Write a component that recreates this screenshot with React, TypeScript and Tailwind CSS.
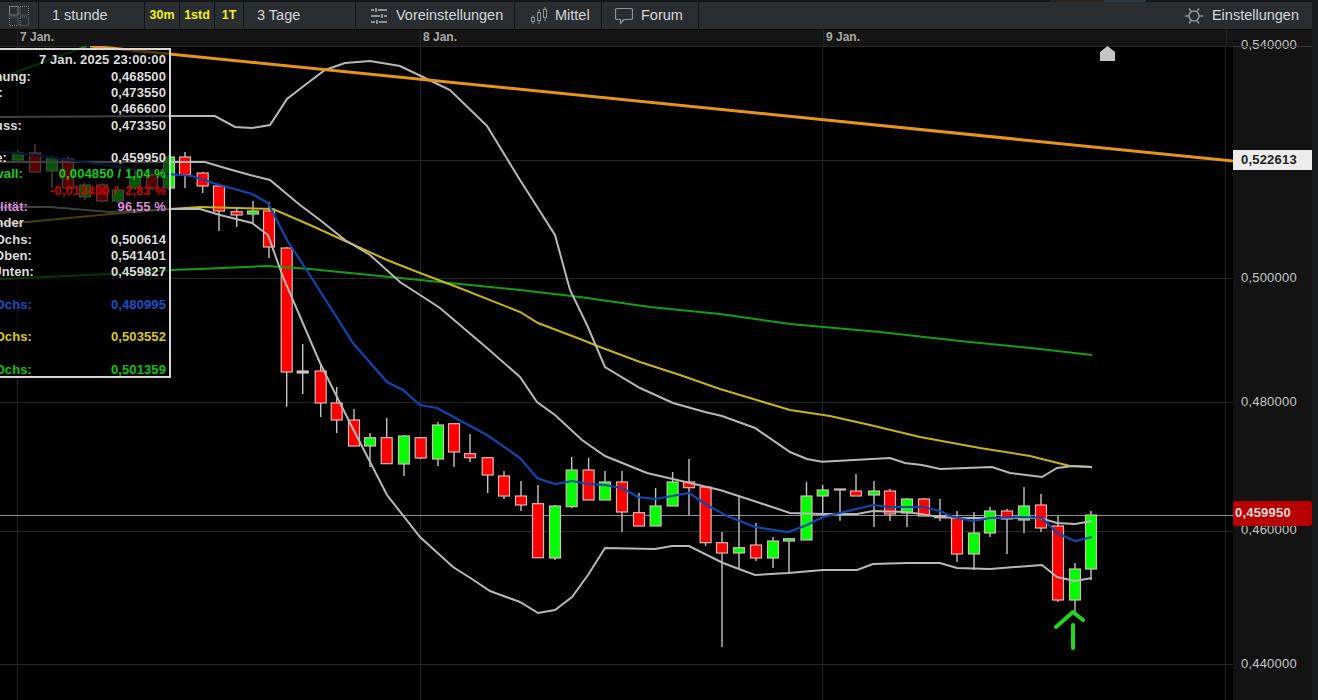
import React from 'react';

type Candle = [x: number, top: number, bottom: number, high: number, low: number, color: 'r' | 'g' | 'w'];

// body top/bottom and wick top/bottom in page pixels, the chart svg uses the same coordinates
const candles: Candle[] = [
  [18, 153, 160, 150, 162, 'g'], [35, 153, 172, 144, 172, 'r'], [52, 158, 171, 156, 188, 'g'], [68, 159, 188, 157, 190, 'r'],
  [85, 185, 197, 183, 200, 'g'], [102, 185, 201, 183, 202, 'r'], [118, 190, 201, 186, 203, 'g'], [135, 177, 188, 170, 190, 'g'],
  [152, 175, 188, 172, 190, 'r'], [169, 157, 188, 155, 190, 'g'],
  [185, 157, 175, 152, 188, 'r'], [202.7, 173, 186, 172, 193, 'r'], [219, 186, 211, 184, 231, 'r'], [236.7, 211.7, 215, 208, 227, 'r'],
  [253, 211, 214, 201, 224, 'g'], [269, 211, 247, 202, 258, 'r'], [286.7, 248, 372, 247, 406.7, 'r'], [302.7, 371, 373, 344, 394, 'w'],
  [320.7, 371, 403, 365, 417, 'r'], [336.7, 403, 420, 387, 433, 'r'], [354, 420, 446, 409, 446, 'r'], [370, 437.7, 446, 433, 467, 'g'],
  [386.7, 437.7, 463.7, 418, 464, 'r'], [404, 436, 464, 435, 476, 'g'], [420.7, 437.7, 458, 437, 459, 'r'], [438, 425, 459, 422, 466, 'g'],
  [454, 423.7, 452, 423, 467, 'r'], [470, 453.7, 457.7, 434, 462, 'r'], [487.7, 457.7, 475, 457, 493, 'r'], [504, 476, 496, 471, 499, 'r'],
  [521, 496, 505, 481, 511, 'r'], [538, 503.7, 557.7, 485, 558, 'r'], [555, 506, 558, 505, 560, 'g'], [571.7, 470, 506.7, 457, 508, 'g'],
  [588.6, 470, 500, 458, 500, 'r'], [605, 482, 500, 471, 500, 'g'], [622, 482, 512, 471, 532, 'r'], [639, 512.7, 526, 493, 526, 'r'],
  [655.6, 506, 526, 488, 526, 'g'], [672.6, 482, 506, 472, 506, 'g'], [689, 482, 487.7, 459, 515, 'r'], [705.6, 487, 542.7, 487, 546, 'r'],
  [722, 542.7, 553, 532, 647, 'r'], [739, 547.7, 553, 495, 568, 'g'], [756, 545, 558, 523, 561, 'r'], [773, 541, 558, 537, 568, 'g'],
  [789, 538.7, 541, 538, 573, 'g'], [806.5, 496, 540, 482, 540, 'g'], [822.7, 490, 496, 485, 515, 'g'], [840, 489, 490, 489, 520.7, 'w'],
  [856, 491, 496, 474, 496, 'r'], [874, 491, 495, 481, 527, 'g'], [890, 491, 514, 489, 521, 'r'], [907, 499, 513, 498, 527, 'g'],
  [924, 499, 516, 498, 516, 'r'], [940, 515.7, 517.7, 499, 521, 'w'], [957, 518, 554, 511, 562, 'r'], [974, 533, 554, 512, 570, 'g'],
  [990, 511, 533, 507, 537, 'g'], [1007, 511, 519, 509, 554, 'r'], [1024, 506, 520, 487, 533, 'g'], [1041, 505, 528, 494, 532, 'r'],
  [1058, 526, 600, 516, 602, 'r'], [1075, 569, 600, 563, 613, 'g'], [1091, 515, 569, 511, 580, 'g'],
];

const candleFill = { r: '#ff0000', g: '#00ff00', w: '#d8d8d8' };

const upperBand = '0,117 171,116 215,116 235,127 252,128 270,125 287,99 305,85 325,70 345,63 370,61 400,66 425,78 450,90 487,126 520,180 555,235 570,290 587,325 605,367 640,388 673,403 705,412 722,416 755,428 790,452 807,459 822,461.7 890,458 905,463 922,465 940,469 992,467 1010,473 1042,477 1057,468 1073,466 1092,467';
const midBand = '0,162 205,162 225,168 250,175 270,180 300,205 320,220 345,240 370,255 400,282 420,295 440,308 487,348 520,377 537,402 555,415 582,440 605,456 647,473 690,483 720,490 757,502 790,513 823,514 857,514 873,511 907,512 940,517 957,518 990,518 1040,518 1057,523 1075,524 1092,521';
const lowerBand = '0,207 50,207 110,212 170,209 200,209 220,215 252,223 268,235 283,277 320,363 350,423 387,495 420,537 453,567 472,579 490,591 520,602 538,613 555,610 572,597 588,575 605,548 655,549 672,546 689,546 723,563 755,575 788,573 823,570 857,570 873,564 907,563 940,563 957,568 990,569 1042,565 1057,577 1075,581 1092,578';
const blueLine = '0,152 17,153 83,162 167,174 192,176 213,183 252,194 268,203 287,240 313,280 353,343 387,382 403,390 420,405 437,408 487,435 520,458 537,478 555,484 572,481 588,484 605,485 622,488 638,497 655,499 672,496 689,493 707,505 727,516 755,527 788,532 807,525 823,517 873,505 890,507 923,507 940,511 953,517 973,521 990,518 1023,517 1042,518 1057,533 1075,541 1092,537';
const yellowLine = '0,224 27,222 100,215 170,209 200,207 273,209 310,225 343,240 387,260 420,273 457,287 520,312 538,323 580,339 600,347 640,362 680,375 720,389 760,401 790,410 830,416 870,425 920,437 980,448 1030,456 1070,466 1092,467';
const greenLine = '0,279 110,274 170,270 200,269 267,266 310,269 340,272 420,280 470,285 520,290 580,297 650,307 720,314 790,324 880,332 960,341 1040,349 1092,355';

const infoRows = [
  { label: 'Eröffnung:', value: '0,468500', w: 'w-[31px]', color: 'text-[#dcdcdc]' },
  { label: 'Hoch:', value: '0,473550', w: 'w-[3px]', color: 'text-[#dcdcdc]' },
  { label: 'Tief:', value: '0,466600', w: 'w-0', color: 'text-[#dcdcdc]' },
  { label: 'Schluss:', value: '0,473350', w: 'w-[22px]', color: 'text-[#dcdcdc]' },
  { label: '', value: '', w: 'w-0', color: '' },
  { label: 'Aktuelle:', value: '0,459950', w: 'w-[7px]', color: 'text-[#dcdcdc]' },
  { label: 'Intervall:', value: '0,004850 / 1,04 %', w: 'w-[23px]', color: 'text-[#14d014]', labelColor: 'text-[#14d014]' },
  { label: '', value: '-0,013400 / -2,83 %', w: 'w-0', color: 'text-[#d00000]' },
  { label: 'Volatilität:', value: '96,55 %', w: 'w-[28px]', color: 'text-[#dc8adc]', labelColor: 'text-[#dc8adc]' },
  { label: 'Bänder', value: '', w: 'w-[24px]', color: '' },
  { label: 'SMA Ochs:', value: '0,500614', w: 'w-[32px]', color: 'text-[#dcdcdc]' },
  { label: 'BB Oben:', value: '0,541401', w: 'w-[32px]', color: 'text-[#dcdcdc]' },
  { label: 'BB Unten:', value: '0,459827', w: 'w-[34px]', color: 'text-[#dcdcdc]' },
  { label: '', value: '', w: 'w-0', color: '' },
  { label: 'SMA Ochs:', value: '0,480995', w: 'w-[32px]', color: 'text-[#1a50c8]', labelColor: 'text-[#1a50c8]' },
  { label: '', value: '', w: 'w-0', color: '' },
  { label: 'SMA Ochs:', value: '0,503552', w: 'w-[32px]', color: 'text-[#d8cc14]', labelColor: 'text-[#d8cc14]' },
  { label: '', value: '', w: 'w-0', color: '' },
  { label: 'SMA Ochs:', value: '0,501359', w: 'w-[32px]', color: 'text-[#12c012]', labelColor: 'text-[#12c012]' },
];

const ToolItem: React.FC<{ className: string; children: React.ReactNode }> = ({ className, children }) => (
  <div className={`flex h-full shrink-0 items-center border-r border-[#101214] ${className}`}>{children}</div>
);

const LayoutIcon = () => (
  <svg width="20" height="20" viewBox="0 0 20 20" fill="none" stroke="#777b7f" strokeWidth="1">
    <rect x="0.5" y="0.5" width="8.5" height="8.5" />
    <rect x="11" y="0.5" width="8.5" height="8.5" strokeDasharray="1 1" />
    <rect x="0.5" y="11" width="8.5" height="8.5" strokeDasharray="1 1" />
    <rect x="11" y="11" width="8.5" height="8.5" strokeDasharray="1 1" />
  </svg>
);

const SlidersIcon = () => (
  <svg width="18" height="18" viewBox="0 0 18 18" fill="none" stroke="#8f9397" strokeWidth="2">
    <path d="M1 3h3M8 3h9M6 1v4M1 9h9M14 9h3M12 7v4M1 15h4M9 15h8M7 13v4" />
  </svg>
);

const CandleIcon = () => (
  <svg width="18" height="18" viewBox="0 0 18 18" fill="none" stroke="#8f9397" strokeWidth="1">
    <rect x="1.5" y="10.5" width="3" height="4" />
    <path d="M3 8v2.5M3 14.5V17" />
    <rect x="7.5" y="5.5" width="3" height="8" />
    <path d="M9 2v3.5M9 13.500V17" />
    <rect x="13.5" y="2.500" width="3" height="8" />
    <path d="M15 0v2.5M15 10.5V14" />
  </svg>
);

const BubbleIcon = () => (
  <svg width="18" height="18" viewBox="0 0 18 18" fill="none" stroke="#8f9397" strokeWidth="1.2" strokeLinejoin="round">
    <path d="M2 1.500h14a1.500 1.500 0 0 1 1.500 1.500v8a1.500 1.500 0 0 1-1.500 1.500H9L5.500 16.500v-4H2A1.500 1.500 0 0 1 .5 11V3A1.500 1.500 0 0 1 2 1.500z" />
  </svg>
);

const GearIcon = () => (
  <svg width="18" height="18" viewBox="0 0 18 18" fill="none" stroke="#8f9397" strokeWidth="1.6">
    <circle cx="9" cy="9" r="5" />
    <path d="M0 9h4M14 9h4M4 1.500l2.500 3.500M14 1.500L11.500 5M4 16.500L6.500 13M14 16.500L11.500 13" />
  </svg>
);

const axisLabels = [
  { text: '0,500000', pos: 'top-[223px]' },
  { text: '0,480000', pos: 'top-[347px]' },
  { text: '0,460000', pos: 'top-[475px]' },
  { text: '0,440000', pos: 'top-[609px]' },
];

const App: React.FC = () => {
  return (
    <div className="flex h-[700px] w-[1318px] overflow-hidden bg-black font-['Liberation_Sans',Arial,sans-serif]">
      <div className="flex w-[1312px] shrink-0 flex-col">
        <div className="flex h-[2px] shrink-0 bg-[#15181a]">
          <div className="ml-[1050px] w-[54px] bg-[#2a2420]" />
          <div className="w-[42px] bg-[#2b3a45]" />
        </div>

        {/* toolbar */}
        <div className="flex h-[27px] shrink-0 items-center bg-[#2b2e31] text-[14.500px] text-[#d4d7da]">
          <ToolItem className="w-[39px] pl-[9px]"><LayoutIcon /></ToolItem>
          <ToolItem className="w-[106px] pl-[13px]">1 stunde</ToolItem>
          <ToolItem className="w-[35px] justify-center text-[12.500px] font-bold text-[#f4f021]">30m</ToolItem>
          <ToolItem className="w-[35px] justify-center text-[12.500px] font-bold text-[#f4f021]">1std</ToolItem>
          <ToolItem className="w-[29px] justify-center text-[12.500px] font-bold text-[#f4f021]">1T</ToolItem>
          <ToolItem className="w-[112px] pl-[13px]">3 Tage</ToolItem>
          <ToolItem className="w-[159px] gap-[8px] pl-[14px]"><SlidersIcon />Voreinstellungen</ToolItem>
          <ToolItem className="w-[87px] gap-[7px] pl-[15px]"><CandleIcon />Mittel</ToolItem>
          <ToolItem className="w-[97px] gap-[8px] pl-[13px]"><BubbleIcon />Forum</ToolItem>
          <div className="ml-auto flex items-center gap-[9px] pr-[13px]"><GearIcon />Einstellungen</div>
        </div>

        {/* date bar */}
        <div className="flex h-[17px] shrink-0 border-t border-[#0b0b0b] bg-[#151515] pl-[17px] text-[12px] font-bold text-[#a8a8a8]">
          <div className="w-[403px] border-l border-[#242424] pl-[2px] leading-[15px]">7 Jan.</div>
          <div className="w-[403px] border-l border-[#242424] pl-[2px] leading-[15px]">8 Jan.</div>
          <div className="w-[403px] border-l border-[#242424] pl-[2px] leading-[15px]">9 Jan.</div>
          <div className="flex-1 border-l border-[#242424]" />
        </div>

        <div className="flex min-h-0 flex-1">
          {/* chart */}
          <div className="relative w-[1233px] shrink-0">
            <svg className="block h-full w-full" viewBox="0 46 1233 654" fill="none">
              <g stroke="#262626" strokeWidth="1">
                <path d="M0 46.500H1233M0 160.500H1233M0 278.500H1233M0 402.500H1233M0 531.500H1233M0 664.500H1233" />
                <path d="M17.500 46V700M420.500 46V700M822.500 46V700M1225.500 46V700" />
              </g>
              <path d="M0 515.500H1233" stroke="#909090" strokeWidth="1.200" />
              {candles.map(([x, top, bottom, high, low, color], i) => (
                <g key={i}>
                  <path d={`M${x} ${high}V${low}`} stroke="#c4c4c4" strokeWidth="1.4" />
                  <rect x={x - 5.5} y={top} width="11" height={bottom - top} fill={candleFill[color]} stroke="#d8b8b8" strokeWidth="1.200" />
                </g>
              ))}
              <polyline points={greenLine} stroke="#12a012" strokeWidth="2" />
              <polyline points={yellowLine} stroke="#c8b414" strokeWidth="2" />
              <polyline points={upperBand} stroke="#b8b8b8" strokeWidth="2" />
              <polyline points={midBand} stroke="#b8b8b8" strokeWidth="2" />
              <polyline points={lowerBand} stroke="#b8b8b8" strokeWidth="2" />
              <polyline points={blueLine} stroke="#0f47b0" strokeWidth="2.200" />
              <polyline points="0,78 87,46" stroke="#0f8a0f" strokeWidth="2" />
              <polyline points="90,46 1233,161" stroke="#e8941c" strokeWidth="3" />
              <polygon points="1100,61 1100,52 1107.500,46 1115,52 1115,61" fill="#c4c4c4" />
              <g stroke="#22d81e" strokeWidth="4" strokeLinecap="round" strokeLinejoin="round">
                <path d="M1073 625V648" />
                <path d="M1056 627L1073 612L1083 620" />
              </g>
            </svg>

            {/* info box */}
            <div className="absolute left-[-2px] top-[2px] flex h-[330px] w-[173px] flex-col border-2 border-[#d8d8d8] bg-black/65 pt-[2px] text-[13px] font-bold tracking-[0.1px]">
              <div className="h-[16.300px] shrink-0 whitespace-nowrap pr-[3px] text-right leading-[16px] text-[#dcdcdc]">7 Jan. 2025 23:00:00</div>
              {infoRows.map((row, i) => (
                <div key={i} className="flex h-[16.300px] shrink-0 items-center justify-between whitespace-nowrap pr-[3px]">
                  <span className={`flex shrink-0 justify-end ${row.w} ${row.labelColor ?? 'text-[#dcdcdc]'}`}>{row.label}</span>
                  <span className={row.color}>{row.value}</span>
                </div>
              ))}
            </div>
          </div>

          {/* price axis */}
          <div className="relative flex-1 bg-[#131313] text-[13px] tracking-[0.2px] text-[#c8c8c8]">
            <div className="absolute left-[8px] top-[-10px] leading-[18px]">0,540000</div>
            <div className="absolute left-0 right-0 top-0 h-px bg-[#3a3a3a]" />
            <div className="absolute inset-x-0 top-[104px] flex h-[20px] items-center bg-[#ececec] pl-[8px] font-bold text-[#222]">0,522613</div>
            {axisLabels.map((a) => (
              <div key={a.text} className={`absolute left-[8px] leading-[18px] ${a.pos}`}>{a.text}</div>
            ))}
            <div className="absolute inset-x-0 top-[454.500px] flex h-[25px] items-center rounded-[3px] bg-[#b80000] pl-[2px] font-bold text-[#f2dcdc]">0,459950</div>
          </div>
        </div>
      </div>
      <div className="flex-1 bg-[#171a1d]" />
    </div>
  );
};

export default App;
